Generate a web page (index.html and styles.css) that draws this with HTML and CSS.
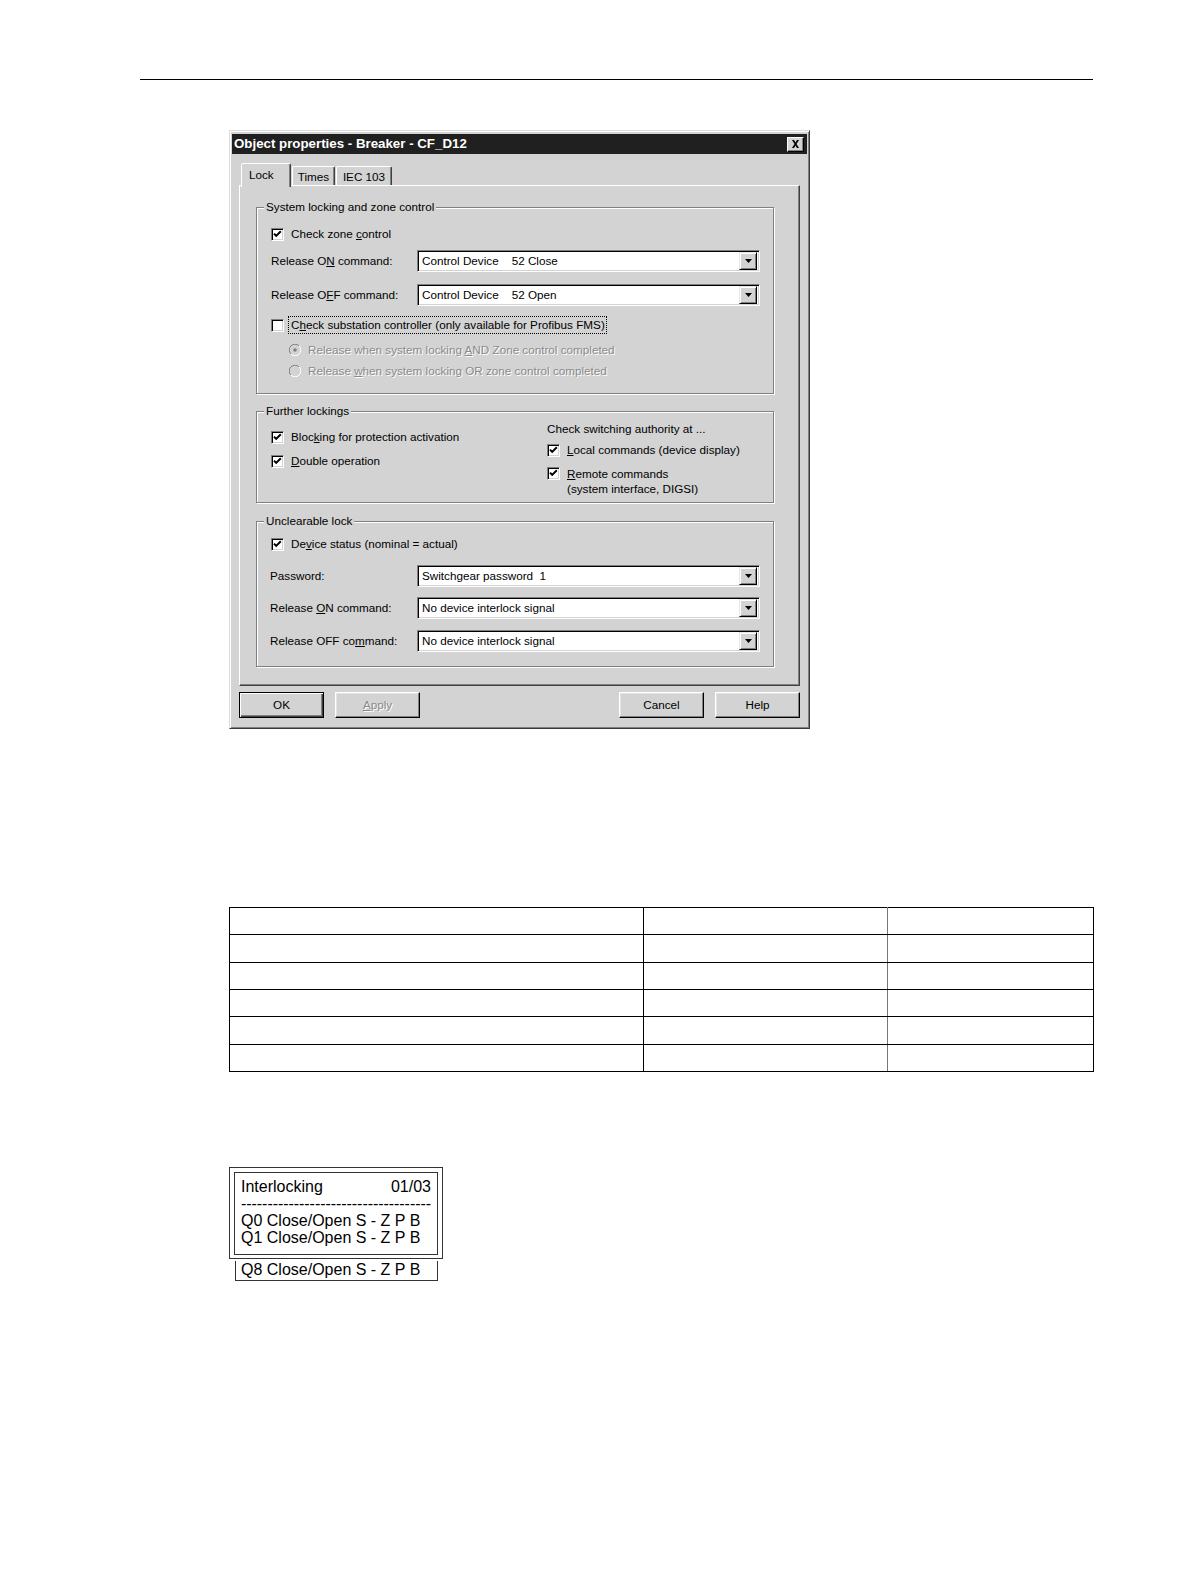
FILE: index.html
```html
<!DOCTYPE html>
<html>
<head>
<meta charset="utf-8">
<meta name="viewport" content="width=device-width, initial-scale=1">
<title>Object properties - Breaker - CF_D12</title>
<link rel="stylesheet" href="styles.css">
</head>
<body>
<div class="page">
  <div class="rule"></div>

  <div class="dialog">
    <div class="titlebar">
      <span class="title">Object properties - Breaker - CF_D12</span>
      <span class="close"><svg width="9" height="8" viewBox="0 0 9 8"><path d="M1 0h2l1.5 2.5L6 0h2L5.5 4 8 8H6L4.5 5.5 3 8H1l2.5-4z" fill="#000"/></svg></span>
    </div>

    <div class="tabs">
      <div class="tab active">Lock</div>
      <div class="tab t-times">Times</div>
      <div class="tab t-iec">IEC 103</div>
    </div>

    <div class="panel">
      <fieldset class="group g1">
        <legend>System locking and zone control</legend>
        <div class="chk-row r-zone">
          <span class="cb"><svg width="11" height="11" viewBox="0 0 11 11"><polyline points="2,4.6 4.2,6.9 8.8,2.3" fill="none" stroke="#000" stroke-width="2"/></svg></span>
          <span>Check zone <u>c</u>ontrol</span>
        </div>
        <div class="field-row r-on">
          <span>Release O<u>N</u> command:</span>
          <div class="combo"><span class="combo-text">Control Device    52 Close</span><span class="drop"><svg width="7" height="4" viewBox="0 0 7 4"><path d="M0 0h7L3.5 4z" fill="#000"/></svg></span></div>
        </div>
        <div class="field-row r-off">
          <span>Release O<u>F</u>F command:</span>
          <div class="combo"><span class="combo-text">Control Device    52 Open</span><span class="drop"><svg width="7" height="4" viewBox="0 0 7 4"><path d="M0 0h7L3.5 4z" fill="#000"/></svg></span></div>
        </div>
        <div class="chk-row r-sub">
          <span class="cb"></span>
          <span class="focus">C<u>h</u>eck substation controller (only available for Profibus FMS)</span>
        </div>
        <div class="radio-row r-and">
          <span class="radio"><svg width="12" height="12" viewBox="0 0 12 12"><path d="M1.9 10.1A5.5 5.5 0 0 1 10.1 1.9" fill="none" stroke="#808080"/><path d="M10.1 1.9A5.5 5.5 0 0 1 1.9 10.1" fill="none" stroke="#fff"/><circle cx="6" cy="6" r="4.5" fill="#d3d3d3"/><circle cx="6" cy="6" r="1.8" fill="#808080"/></svg></span>
          <span class="disabled">Release when system locking <u>A</u>ND Zone control completed</span>
        </div>
        <div class="radio-row r-or">
          <span class="radio"><svg width="12" height="12" viewBox="0 0 12 12"><path d="M1.9 10.1A5.5 5.5 0 0 1 10.1 1.9" fill="none" stroke="#808080"/><path d="M10.1 1.9A5.5 5.5 0 0 1 1.9 10.1" fill="none" stroke="#fff"/><circle cx="6" cy="6" r="4.5" fill="#d3d3d3"/></svg></span>
          <span class="disabled">Release <u>w</u>hen system locking OR zone control completed</span>
        </div>
      </fieldset>

      <fieldset class="group g2">
        <legend>Further lockings</legend>
        <div class="cols">
          <div class="col-left">
            <div class="chk-row r-block">
              <span class="cb"><svg width="11" height="11" viewBox="0 0 11 11"><polyline points="2,4.6 4.2,6.9 8.8,2.3" fill="none" stroke="#000" stroke-width="2"/></svg></span>
              <span>Bloc<u>k</u>ing for protection activation</span>
            </div>
            <div class="chk-row r-double">
              <span class="cb"><svg width="11" height="11" viewBox="0 0 11 11"><polyline points="2,4.6 4.2,6.9 8.8,2.3" fill="none" stroke="#000" stroke-width="2"/></svg></span>
              <span><u>D</u>ouble operation</span>
            </div>
          </div>
          <div class="col-right">
            <div class="heading">Check switching authority at ...</div>
            <div class="chk-row r-local">
              <span class="cb"><svg width="11" height="11" viewBox="0 0 11 11"><polyline points="2,4.6 4.2,6.9 8.8,2.3" fill="none" stroke="#000" stroke-width="2"/></svg></span>
              <span><u>L</u>ocal commands (device display)</span>
            </div>
            <div class="chk-row multi r-remote">
              <span class="cb"><svg width="11" height="11" viewBox="0 0 11 11"><polyline points="2,4.6 4.2,6.9 8.8,2.3" fill="none" stroke="#000" stroke-width="2"/></svg></span>
              <span><u>R</u>emote commands<br>(system interface, DIGSI)</span>
            </div>
          </div>
        </div>
      </fieldset>

      <fieldset class="group g3">
        <legend>Unclearable lock</legend>
        <div class="chk-row r-status">
          <span class="cb"><svg width="11" height="11" viewBox="0 0 11 11"><polyline points="2,4.6 4.2,6.9 8.8,2.3" fill="none" stroke="#000" stroke-width="2"/></svg></span>
          <span>De<u>v</u>ice status (nominal = actual)</span>
        </div>
        <div class="field-row r-pass">
          <span class="lbl3">Password:</span>
          <div class="combo"><span class="combo-text">Switchgear password  1</span><span class="drop"><svg width="7" height="4" viewBox="0 0 7 4"><path d="M0 0h7L3.5 4z" fill="#000"/></svg></span></div>
        </div>
        <div class="field-row r-on3">
          <span class="lbl3">Release <u>O</u>N command:</span>
          <div class="combo"><span class="combo-text">No device interlock signal</span><span class="drop"><svg width="7" height="4" viewBox="0 0 7 4"><path d="M0 0h7L3.5 4z" fill="#000"/></svg></span></div>
        </div>
        <div class="field-row r-off3">
          <span class="lbl3">Release OFF co<u>m</u>mand:</span>
          <div class="combo"><span class="combo-text">No device interlock signal</span><span class="drop"><svg width="7" height="4" viewBox="0 0 7 4"><path d="M0 0h7L3.5 4z" fill="#000"/></svg></span></div>
        </div>
      </fieldset>
    </div>

    <div class="buttons">
      <div class="btn default">OK</div>
      <div class="btn disabled-btn"><span class="disabled"><u>A</u>pply</span></div>
      <div class="spacer"></div>
      <div class="btn">Cancel</div>
      <div class="btn">Help</div>
    </div>
  </div>

  <table class="grid">
    <tr><td></td><td></td><td></td></tr>
    <tr><td></td><td></td><td></td></tr>
    <tr><td></td><td></td><td></td></tr>
    <tr><td></td><td></td><td></td></tr>
    <tr><td></td><td></td><td></td></tr>
    <tr><td></td><td></td><td></td></tr>
  </table>

  <div class="lcd">
    <div class="lcd-screen">
      <div class="lcd-head"><span>Interlocking</span><span>01/03</span></div>
      <div class="lcd-dash">------------------------------------</div>
      <div>Q0 Close/Open S - Z P B</div>
      <div>Q1 Close/Open S - Z P B</div>
    </div>
  </div>
  <div class="lcd-more">Q8 Close/Open S - Z P B</div>
</div>
</body>
</html>
```

FILE: styles.css
```css
* { box-sizing: border-box; }

html {
  margin: 0;
  background: #fff;
  overflow: hidden;
}

body {
  margin: 0;
  color: #000;
  font-family: "Liberation Sans", Arial, sans-serif;
  overflow: hidden;
}

.page {
  padding-top: 79px;
  height: 1500px;
  overflow: hidden;
}

.rule {
  margin-left: 140px;
  width: 953px;
  border-top: 1px solid #000;
}

/* ---------- dialog ---------- */
.dialog {
  margin: 50px 0 0 229px;
  width: 581px;
  background: #d3d3d3;
  border: 1px solid;
  border-color: #dcdcdc #3a3a3a #3a3a3a #dcdcdc;
  box-shadow: inset 1px 1px 0 #fff, inset -1px -1px 0 #808080;
  padding: 3px 2px 2px 2px;
  font-size: 11.7px;
  line-height: 14px;
}

.titlebar {
  height: 20px;
  background: #202020;
  color: #fff;
  display: flex;
  align-items: center;
  justify-content: space-between;
  padding: 0 3px 0 2px;
}

.title {
  font-weight: bold;
  font-size: 13.3px;
}

.close {
  width: 17px;
  height: 15px;
  background: #d3d3d3;
  border: 1px solid;
  border-color: #fff #000 #000 #fff;
  box-shadow: inset -1px -1px 0 #808080;
  display: flex;
  align-items: center;
  justify-content: center;
}
.close svg { display: block; }

/* ---------- tabs ---------- */
.tabs {
  margin-top: 9px;
  height: 22px;
  padding-left: 9px;
  display: flex;
  align-items: flex-end;
}

.tab {
  height: 19px;
  margin-left: 1px;
  border: 1px solid;
  border-bottom: none;
  border-color: #fff #404040 transparent #fff;
  border-radius: 2px 2px 0 0;
  box-shadow: inset -1px 0 0 #808080;
  display: flex;
  align-items: center;
  justify-content: center;
  padding-top: 1px;
}

.tab.active {
  position: relative;
  z-index: 1;
  width: 50px;
  height: 24px;
  margin-left: 0;
  margin-bottom: -2px;
  background: #d3d3d3;
  justify-content: flex-start;
  padding-left: 7px;
  padding-top: 0;
  padding-bottom: 2px;
}

.t-times { width: 43px; }
.t-iec { width: 56px; }

/* ---------- panel ---------- */
.panel {
  margin: 0 7px;
  width: 561px;
  height: 501px;
  border: 1px solid;
  border-color: #fff #404040 #404040 #fff;
  box-shadow: inset -1px -1px 0 #808080;
  padding: 14px 25px 18px 16px;
}

.group {
  margin: 0;
  min-width: 0;
  border: 1px solid #808080;
  box-shadow: inset 1px 1px 0 #fff, 1px 1px 0 #fff;
  padding: 0 13px 14px 14px;
}

.group legend {
  margin-left: -7px;
  padding: 0 2px;
  height: 14px;
  line-height: 14px;
  background: #d3d3d3;
}

.g2 { margin-top: 10px; padding-bottom: 6px; }
.g3 { margin-top: 11px; }

.chk-row {
  display: flex;
  align-items: center;
  height: 16px;
}

.chk-row.multi {
  height: 30px;
  align-items: flex-start;
  line-height: 15px;
}
.chk-row.multi .cb { margin-top: 1px; }

.radio-row {
  display: flex;
  align-items: center;
  height: 16px;
  padding-left: 18px;
}

.field-row {
  display: grid;
  grid-template-columns: 146px 343px;
  align-items: center;
  height: 22px;
}

.lbl3 { margin-left: -1px; }

/* vertical rhythm of the rows */
.r-zone { margin-top: 12px; }
.r-on { margin-top: 8px; }
.r-off { margin-top: 12px; }
.r-sub { margin-top: 11px; }
.r-and { margin-top: 9px; }
.r-or { margin-top: 5px; }

.r-block { margin-top: 11px; }
.r-double { margin-top: 8px; }
.heading { margin-top: 4px; height: 14px; }
.r-local { margin-top: 6px; }
.r-remote { margin-top: 8px; }

.r-status { margin-top: 8px; }
.r-pass { margin-top: 13px; }
.r-on3 { margin-top: 10px; }
.r-off3 { margin-top: 11px; }

.cols {
  display: grid;
  grid-template-columns: 276px 1fr;
}

/* checkbox */
.cb {
  flex: none;
  width: 13px;
  height: 13px;
  margin-right: 7px;
  background: #fff;
  border: 1px solid;
  border-color: #808080 #fff #fff #808080;
  box-shadow: inset 1px 1px 0 #000, inset -1px -1px 0 #d3d3d3;
}
.cb svg { display: block; }

.radio {
  flex: none;
  width: 12px;
  height: 12px;
  margin-right: 7px;
}
.radio svg { display: block; }

.focus {
  outline: 1px dotted #000;
  outline-offset: 1px;
  margin-left: -1px;
  padding-left: 1px;
}

.disabled {
  color: #8a8a8a;
  text-shadow: 1px 1px 0 #fff;
}

/* combo box */
.combo {
  height: 22px;
  background: #fff;
  border: 1px solid;
  border-color: #808080 #fff #fff #808080;
  box-shadow: inset 1px 1px 0 #000, inset -1px -1px 0 #d3d3d3;
  display: flex;
  align-items: center;
  justify-content: space-between;
  padding: 2px 2px 2px 4px;
}

.combo-text {
  white-space: pre;
}

.drop {
  width: 18px;
  height: 18px;
  background: #d3d3d3;
  border: 1px solid;
  border-color: #e6e6e6 #000 #000 #e6e6e6;
  box-shadow: inset 1px 1px 0 #fff, inset -1px -1px 0 #808080;
  display: flex;
  align-items: center;
  justify-content: center;
}
.drop svg { display: block; }

/* buttons */
.buttons {
  margin-top: 6px;
  margin-bottom: 8px;
  padding: 0 7px;
  display: flex;
  gap: 10px;
}

.spacer { flex: 1; }

.btn {
  width: 85px;
  height: 26px;
  border: 1px solid;
  border-color: #fff #000 #000 #fff;
  box-shadow: inset -1px -1px 0 #808080, inset 1px 1px 0 #e4e4e4;
  display: flex;
  align-items: center;
  justify-content: center;
}

.btn + .btn { margin-left: 1px; }
.spacer + .btn { margin-left: 0; }

.btn.default {
  border-color: #000;
  box-shadow: inset 1px 1px 0 #fff, inset -1px -1px 0 #404040, inset -2px -2px 0 #808080;
}

/* ---------- table ---------- */
.grid {
  margin: 178px 0 0 229px;
  width: 865px;
  border-collapse: collapse;
}

.grid td {
  height: 27.33px;
  padding: 0;
  border: 1px solid #000;
}

.grid td:nth-child(1) { width: 414px; }
.grid td:nth-child(2) { width: 244px; border-right-color: #777; }

/* ---------- LCD ---------- */
.lcd {
  margin: 95px 0 0 229px;
  width: 214px;
  border: 1px solid #333;
  padding: 4px 4px 3px 4px;
  font-size: 16px;
  line-height: 17px;
}

.lcd-screen {
  border: 1px solid #333;
  padding: 5px 6px 8px 6px;
}

.lcd-head {
  display: flex;
  justify-content: space-between;
}

.lcd-dash {
  white-space: nowrap;
  letter-spacing: -0.05px;
}

.lcd-more {
  margin: 2px 0 0 235px;
  width: 203px;
  border: 1px solid #333;
  border-top: none;
  padding: 0 0 2px 5px;
  font-size: 16px;
  line-height: 17px;
}
```
